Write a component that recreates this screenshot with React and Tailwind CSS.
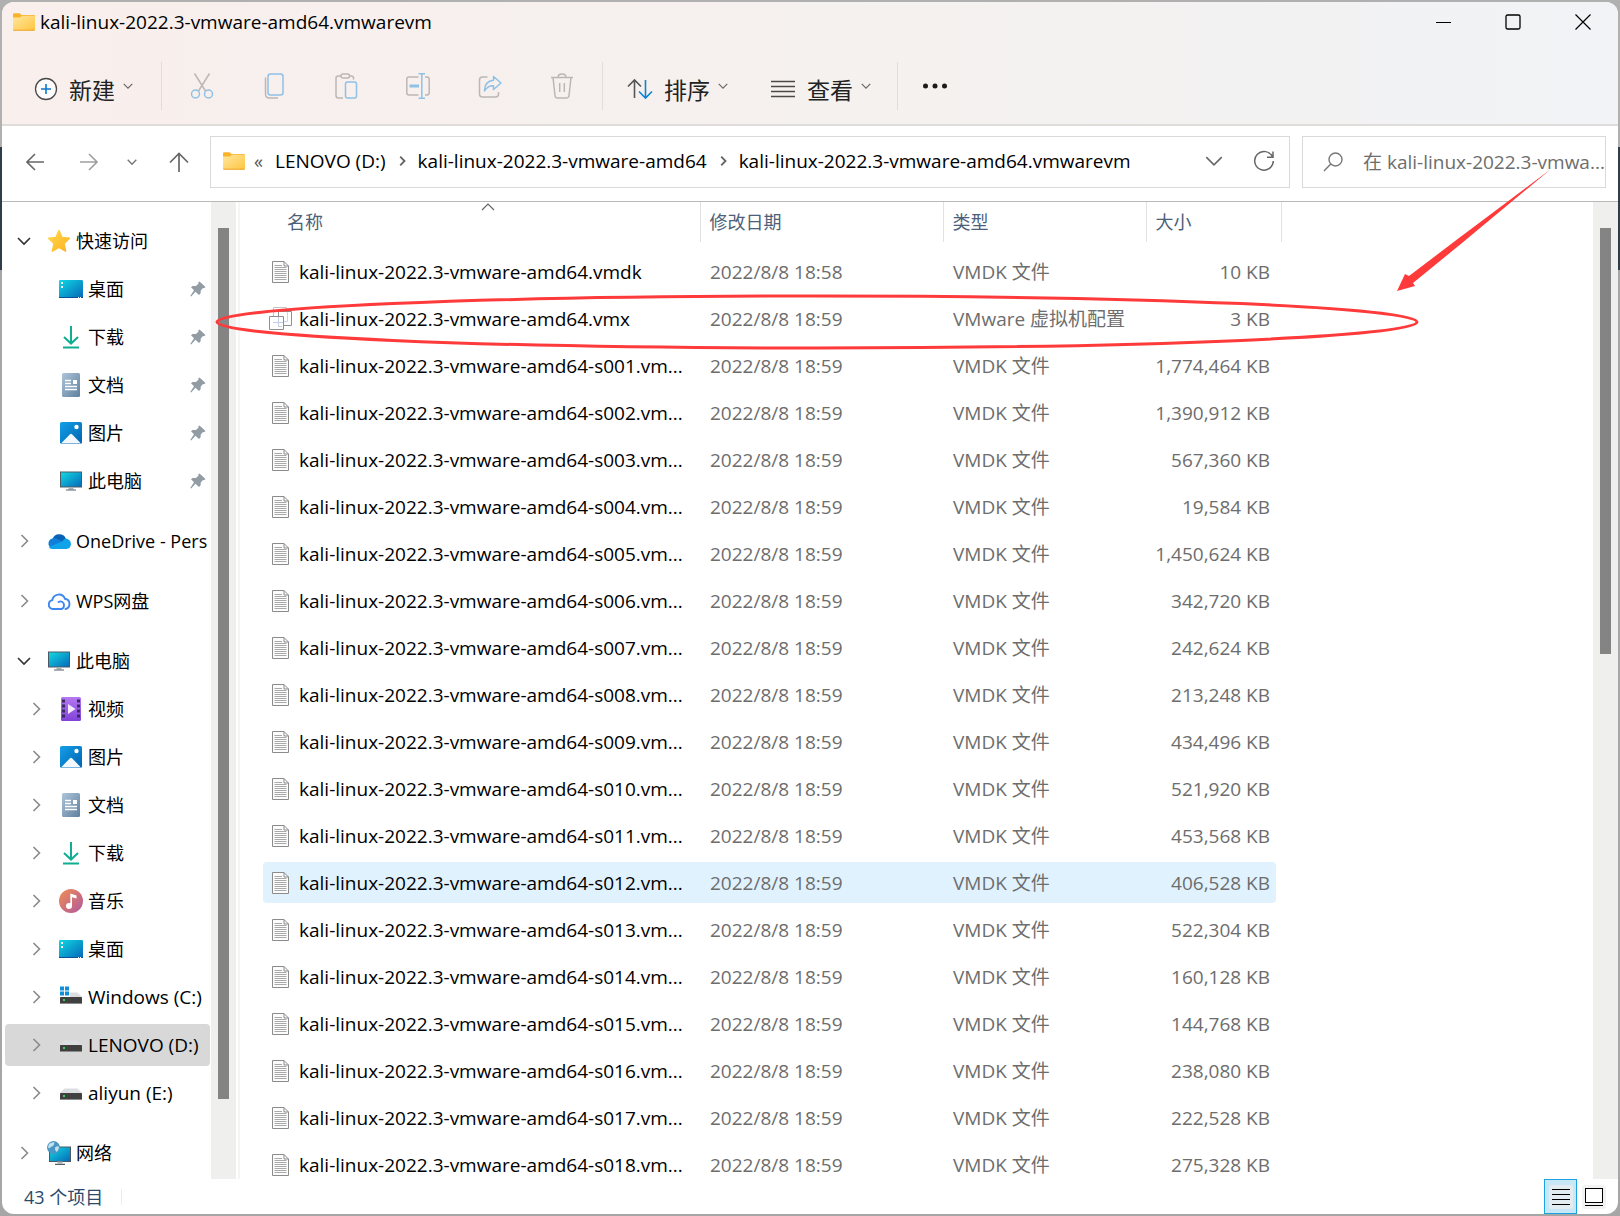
import React, { useState } from "react";

const sizes = [
  "1,774,464", "1,390,912", "567,360", "19,584", "1,450,624", "342,720",
  "242,624", "213,248", "434,496", "521,920", "453,568", "406,528",
  "522,304", "160,128", "144,768", "238,080", "222,528", "275,328",
];

const base = "kali-linux-2022.3-vmware-amd64";

const files = [
  { name: `${base}.vmdk`, date: "2022/8/8 18:58", type: "VMDK 文件", size: "10 KB" },
  { name: `${base}.vmx`, date: "2022/8/8 18:59", type: "VMware 虚拟机配置", size: "3 KB", vm: true },
  ...sizes.map((size, i) => ({
    name: `${base}-s${String(i + 1).padStart(3, "0")}.vm...`,
    date: "2022/8/8 18:59",
    type: "VMDK 文件",
    size: `${size} KB`,
  })),
];

const Folder = () => (
  <svg width="22" height="18" viewBox="0 0 22 18" className="shrink-0">
    <defs>
      <linearGradient id="folder" x1="0" y1="0" x2="1" y2="1">
        <stop offset="0" stopColor="#ffe7a0" />
        <stop offset="1" stopColor="#ffc53f" />
      </linearGradient>
    </defs>
    <path d="M0 1.5Q0 .3 1.2.3H6.600L8.500 2H20.800Q22 2 22 3.200V10H0Z" fill="#fbb32c" />
    <path d="M0 4.500H7L9 2.800H21Q22 2.800 22 3.800V16.500Q22 17.500 21 17.500H1Q0 17.500 0 16.500Z" fill="url(#folder)" />
    <path d="M.3 17.200H21.700" stroke="#eda325" strokeWidth="1" />
  </svg>
);

const Chevron = ({ dir = "right", size = 14, weight = 1.6, className = "" }) => {
  const d = {
    right: "M4.500 1L10.500 7L4.500 13",
    down: "M1 4L7 10L13 4",
    up: "M1 10L7 4L13 10",
  }[dir];
  return (
    <svg width={size} height={size} viewBox="0 0 14 14" fill="none" stroke="currentColor" strokeWidth={weight} className={`shrink-0 ${className}`}>
      <path d={d} />
    </svg>
  );
};

const Star = () => (
  <svg width="24" height="24" viewBox="0 0 24 24">
    <defs>
      <linearGradient id="star" x1="0" y1="0" x2="1" y2="1">
        <stop offset="0" stopColor="#ffdb4d" />
        <stop offset="1" stopColor="#fdb022" />
      </linearGradient>
    </defs>
    <path d="M12 1.500L15 8.400L22.500 9.200L17 14.400L18.600 22.200L12 18.500L5.400 22.200L7 14.400L1.500 9.200L9 8.400Z" fill="url(#star)" stroke="url(#star)" strokeWidth="1.400" strokeLinejoin="round" />
  </svg>
);

const Desktop = () => (
  <svg width="24" height="24" viewBox="0 0 24 24">
    <defs>
      <linearGradient id="desk" x1="0" y1="0" x2="1" y2="1">
        <stop offset="0" stopColor="#10d8e4" />
        <stop offset="1" stopColor="#0567b8" />
      </linearGradient>
    </defs>
    <rect y="3" width="24" height="18" rx="1.200" fill="url(#desk)" />
    <path d="M2 5h2v2H2zM2 9h2v2H2z" fill="#fff" />
    <path d="M0 20.500H24" stroke="#07549b" strokeWidth="1" />
    <path d="M19 20h1v1h-1zM21 20h1v1h-1z" fill="#fff" />
  </svg>
);

const Download = () => (
  <svg width="24" height="24" viewBox="0 0 24 24" fill="none" stroke="#10ad92" strokeWidth="2">
    <path d="M12 1V18M5 12L12 18.600L19 12" />
    <path d="M4 22.600H20" />
  </svg>
);

const Doc = () => (
  <svg width="24" height="24" viewBox="0 0 24 24">
    <defs>
      <linearGradient id="doc" x1="0" y1="0" x2="1" y2="1">
        <stop offset="0" stopColor="#adc5d9" />
        <stop offset="1" stopColor="#60809f" />
      </linearGradient>
    </defs>
    <rect x="3" width="18" height="24" rx="1.500" fill="url(#doc)" />
    <path d="M6 7.500h6M6 10.500h6M6 13.500h12M6 16.500h12" stroke="#fff" strokeWidth="1.300" />
    <rect x="14" y="7" width="4" height="4" fill="#fff" />
  </svg>
);

const Picture = () => (
  <svg width="24" height="24" viewBox="0 0 24 24">
    <defs>
      <linearGradient id="pic" x1="0" y1="0" x2="1" y2="1">
        <stop offset="0" stopColor="#12a0e8" />
        <stop offset="1" stopColor="#0362b0" />
      </linearGradient>
    </defs>
    <rect x="1" y="1" width="22" height="22" rx="1.800" fill="url(#pic)" />
    <path d="M2 22.500L11 13.200Q12 12.200 13 13.200L22 22.500Z" fill="#f3f8fd" />
    <circle cx="17.500" cy="6" r="2.200" fill="#fff" />
  </svg>
);

const Computer = () => (
  <svg width="24" height="24" viewBox="0 0 24 24">
    <defs>
      <linearGradient id="pc" x1="0" y1="0" x2="1" y2="1">
        <stop offset="0" stopColor="#12dbe2" />
        <stop offset="1" stopColor="#0667b9" />
      </linearGradient>
    </defs>
    <rect x="1.500" y="3" width="21" height="15" fill="url(#pc)" stroke="#4d5a66" strokeWidth="1" />
    <path d="M9.500 18.500h5v2h-5z" fill="#a8b0b6" />
    <path d="M7 21h10" stroke="#55606a" strokeWidth="1.200" />
  </svg>
);

const Video = () => (
  <svg width="24" height="24" viewBox="0 0 24 24">
    <defs>
      <linearGradient id="vid" x1="0" y1="0" x2="0" y2="1">
        <stop offset="0" stopColor="#b579f2" />
        <stop offset="1" stopColor="#8142d8" />
      </linearGradient>
    </defs>
    <rect x="2" width="20" height="24" rx="1.500" fill="url(#vid)" />
    <path d="M4.500 2.500V22M19.500 2.500V22" stroke="#3a2a63" strokeWidth="3" strokeDasharray="3 2" />
    <path d="M9 7V17L16.500 12Z" fill="#f4eafd" />
  </svg>
);

const Music = () => (
  <svg width="24" height="24" viewBox="0 0 24 24">
    <defs>
      <linearGradient id="mus" x1="0" y1="0" x2="1" y2="1">
        <stop offset="0" stopColor="#f18e52" />
        <stop offset="1" stopColor="#b0589f" />
      </linearGradient>
    </defs>
    <circle cx="12" cy="12" r="12" fill="url(#mus)" />
    <circle cx="10" cy="17" r="3" fill="#fff" />
    <path d="M11.300 17V4.500L17.500 6.500V9.500L13 8.200V17Z" fill="#fff" />
  </svg>
);

const Drive = ({ system }) => (
  <svg width="24" height="24" viewBox="0 0 24 24">
    <path d="M5.500 7.500H18.500L23 12H1Z" fill="#dcdee2" />
    <rect x="1" y="12" width="22" height="7" rx=".8" fill="#404040" />
    <path d="M1 18.500H23" stroke="#8a8a8a" strokeWidth="1" />
    <rect x="4" y="14" width="2" height="2" fill="#35d24c" />
    {system && (
      <g>
        <rect x="0" width="11" height="11" y="1" fill="#fff" />
        <path d="M1 1.500h4v4H1zM6 1.500h4v4H6zM1 6.500h4v4H1zM6 6.500h4v4H6z" fill="#0e8fd8" />
      </g>
    )}
  </svg>
);

const OneDrive = () => (
  <svg width="24" height="24" viewBox="0 0 24 24">
    <path d="M5.500 10A7.200 7.200 0 0 1 18.800 9.500L15 14H7Z" fill="#0862b5" />
    <path d="M4.500 19A5 5 0 0 1 5.500 9.500Q9 8.500 12.500 11L19 15.500L14 19Z" fill="#0f7fd9" />
    <path d="M1.800 18L15.500 12.300Q16.500 9.500 19 9.500Q23.800 10.500 24 15Q23.500 19.800 19.500 20H5Q3 19.800 1.800 18Z" fill="#0fa3ea" />
  </svg>
);

const WpsCloud = () => (
  <svg width="24" height="24" viewBox="0 0 24 24" fill="none" stroke="#3d87f0" strokeWidth="1.900" strokeLinecap="round">
    <path d="M14.500 20H5.500A4.500 4.500 0 0 1 5.300 11.200A6.600 6.600 0 0 1 18 9.800A5.200 5.200 0 0 1 18.500 20" />
    <path d="M11.500 13A3.600 3.600 0 0 1 17 16.500Q16.800 19.500 14.500 20" />
  </svg>
);

const Network = () => (
  <svg width="24" height="24" viewBox="0 0 24 24">
    <rect x="2.500" y="6" width="21" height="14.500" fill="url(#pc)" stroke="#4d5a66" strokeWidth="1" />
    <path d="M10.500 20.500h5v2h-5z" fill="#a8b0b6" />
    <path d="M8 23.400h10" stroke="#55606a" strokeWidth="1.200" />
    <circle cx="6.500" cy="6.500" r="6.500" fill="#4a97c4" />
    <path d="M2 3Q5 .8 7.500 1.500Q7 5 4 6Q2 8 1 6.500ZM8 6.500Q11 4.500 12 6Q12 9 9.500 11Q7.500 9 8 6.500Z" fill="#c3e1ef" />
  </svg>
);

const Pin = () => (
  <svg width="16" height="16" viewBox="0 0 16 16" className="shrink-0">
    <path d="M9.500.5L15.500 6L14 7.300L13 7L10.800 9.500L10.500 12.500L9 14L5.500 10.800L1.200 15.500L.3 15L4 9.200L1 6.200L2.600 5L6 5L8.600 2.500L8.200 1.500Z" fill="#919ca5" />
  </svg>
);

const FileIcon = () => (
  <svg width="17" height="22" viewBox="0 0 17 22" fill="none" className="shrink-0">
    <path d="M.5.5H12L16.500 5V21.500H.5Z" fill="#fcfcfc" stroke="#8b8b8b" />
    <path d="M12 .5V5H16.500" stroke="#8b8b8b" />
    <path d="M2.500 4.500H10M2.500 6.500H14.500M2.500 8.500H14.500M2.500 10.500H14.500M2.500 12.500H14.500M2.500 14.500H14.500M2.500 16.500H14.500M2.500 18.500H14.500" stroke="#a9a9a9" />
  </svg>
);

const VmIcon = () => (
  <svg width="23" height="23" viewBox="0 0 23 23" fill="none" className="shrink-0">
    <path d="M4.500 9V.5H17.500V4.500" stroke="#c4c4c4" />
    <path d="M9.500 9V4.500H22.500V18.500H14.500" stroke="#8f8f8f" />
    <path d="M18.500 5V14.500H14.500" stroke="#ccd6ea" />
    <path d="M.5 9.500H14.500V22.500H.5Z" fill="#fff" stroke="#8f8f8f" />
    <path d="M9.500 10V15.500H14M4 15.500H9.500V19.500H13" stroke="#c3cfe8" />
  </svg>
);

const quickAccess = [
  { label: "桌面", icon: <Desktop /> },
  { label: "下载", icon: <Download /> },
  { label: "文档", icon: <Doc /> },
  { label: "图片", icon: <Picture /> },
  { label: "此电脑", icon: <Computer /> },
];

const computer = [
  { label: "视频", icon: <Video /> },
  { label: "图片", icon: <Picture /> },
  { label: "文档", icon: <Doc /> },
  { label: "下载", icon: <Download /> },
  { label: "音乐", icon: <Music /> },
  { label: "桌面", icon: <Desktop /> },
  { label: "Windows (C:)", icon: <Drive system />, latin: true },
  { label: "LENOVO (D:)", icon: <Drive />, latin: true },
  { label: "aliyun (E:)", icon: <Drive />, latin: true },
];

const TreeItem = ({ label, icon, open, child, pinned, selected, latin, onClick }) => (
  <li className="py-[3px] pl-[3px]">
    <button
      onClick={onClick}
      className={`flex h-[42px] w-full items-center overflow-hidden rounded-sm whitespace-nowrap ${child ? "pl-6" : "pl-3"} ${selected ? "bg-[#d8d8d8]" : ""}`}
    >
      <span className="flex w-[30px] shrink-0">
        {!pinned && <Chevron dir={open ? "down" : "right"} className={open ? "text-[#333]" : "text-[#8a8a8a]"} />}
      </span>
      <span className="mr-[5px] shrink-0">{icon}</span>
      <span className={latin ? "text-[19px]" : "text-lg"}>{label}</span>
      {pinned && (
        <span className="mr-1 ml-auto">
          <Pin />
        </span>
      )}
    </button>
  </li>
);

const Sidebar = () => {
  const [current, setCurrent] = useState("LENOVO (D:)");

  return (
    <nav className="mr-px w-[208px] shrink-0 overflow-hidden pt-[15px] leading-6">
      <ul>
        <TreeItem label="快速访问" icon={<Star />} open />
        {quickAccess.map((item) => (
          <TreeItem key={item.label} {...item} child pinned />
        ))}
      </ul>
      <ul className="mt-3">
        <TreeItem label="OneDrive - Pers" icon={<OneDrive />} />
      </ul>
      <ul className="mt-3">
        <TreeItem label="WPS网盘" icon={<WpsCloud />} />
      </ul>
      <ul className="mt-3">
        <TreeItem label="此电脑" icon={<Computer />} open />
        {computer.map((item) => (
          <TreeItem
            key={item.label}
            {...item}
            child
            selected={current === item.label}
            onClick={() => setCurrent(item.label)}
          />
        ))}
      </ul>
      <ul className="mt-3">
        <TreeItem label="网络" icon={<Network />} />
      </ul>
    </nav>
  );
};

const Divider = () => <div className="h-12 w-px bg-[#e3dcda]" />;

const ToolIcon = ({ label, children }) => (
  <button aria-label={label} className="flex w-12 justify-center">
    <svg width="24" height="26" viewBox="0 0 24 26" fill="none" stroke="#bcb6b4" strokeWidth="1.500">
      {children}
    </svg>
  </button>
);

const MenuButton = ({ label, icon }) => (
  <button className="mt-1.5 flex items-center text-[23px] text-[#222]">
    {icon}
    <span className="mr-2 ml-[11px] pt-0.5">{label}</span>
    <Chevron dir="down" size={10} className="mb-1.5 text-[#666]" />
  </button>
);

const Toolbar = () => (
  <div className="flex h-[82px] items-center pt-1.5 pl-8">
    <MenuButton
      label="新建"
      icon={
        <svg width="24" height="24" viewBox="0 0 24 24" fill="none">
          <circle cx="12" cy="12" r="10.500" fill="#fdfbfb" stroke="#4a4a4a" strokeWidth="1.300" />
          <path d="M12 7V17M7 12H17" stroke="#0a78cf" strokeWidth="1.600" />
        </svg>
      }
    />
    <div className="mr-4 ml-7">
      <Divider />
    </div>
    <div className="flex gap-6">
      <ToolIcon label="剪切">
        <path d="M4.500.5L15.500 18M19.500.5L8.500 18" />
        <circle cx="5.500" cy="21" r="4" stroke="#8fc1e6" />
        <circle cx="18.500" cy="21" r="4" stroke="#8fc1e6" />
      </ToolIcon>
      <ToolIcon label="复制">
        <path d="M3.500 4.500V21Q3.500 25 7.500 25H16" />
        <rect x="6" y="1" width="15" height="21" rx="2.500" stroke="#8fc1e6" />
      </ToolIcon>
      <ToolIcon label="粘贴">
        <path d="M9 25H4.500Q2 25 2 22.500V5Q2 3 4.500 3H7M15 3H17Q19.500 3 19.500 5V6.500" />
        <rect x="7" y="1" width="8.500" height="4" rx="2" />
        <rect x="11.500" y="9" width="11" height="16" rx="2" stroke="#8fc1e6" />
      </ToolIcon>
      <ToolIcon label="重命名">
        <path d="M12.500 4H3Q.8 4 .8 6.500V19.500Q.8 22 3 22H12.500M19 4H21Q23.200 4 23.200 6.500V19.500Q23.200 22 21 22H19" />
        <path d="M3.500 13H13" stroke="#8fc1e6" strokeWidth="3" />
        <path d="M15.800 1V25M12.500.8H19M12.500 25.200H19" stroke="#8fc1e6" />
      </ToolIcon>
      <ToolIcon label="共享">
        <path d="M9.500 4H4.500Q1.500 4 1.500 7V21Q1.500 24 4.500 24H17.500Q20.500 24 20.500 21V19" />
        <path d="M15.500 3.500L23 10L15.500 16.500V12.800Q9.500 12.500 6.500 18Q6.500 8 15.500 7.200Z" stroke="#8fc1e6" strokeLinejoin="round" />
      </ToolIcon>
      <ToolIcon label="删除">
        <path d="M1 4.500H23M8 4.500Q8 1 12 1Q16 1 16 4.500M3 4.500L5 22.500Q5.300 25 7.500 25H16.500Q18.700 25 19 22.500L21 4.500M9.700 10V19M14.300 10V19" />
      </ToolIcon>
    </div>
    <div className="mr-6 ml-4">
      <Divider />
    </div>
    <MenuButton
      label="排序"
      icon={
        <svg width="26" height="22" viewBox="0 0 26 22" fill="none" strokeWidth="1.600">
          <path d="M7.500 20V2M1 8.500L7.500 2L14 8.500" stroke="#555" />
          <path d="M18.500 2V20M12 13.500L18.500 20L25 13.500" stroke="#0a84d8" />
        </svg>
      }
    />
    <div className="ml-[42px]">
      <MenuButton
        label="查看"
        icon={
          <svg width="26" height="18" viewBox="0 0 26 18" stroke="#4a4a4a" strokeWidth="1.400">
            <path d="M1 1.500H25M1 6.500H25M1 11.500H25M1 16.500H25" />
          </svg>
        }
      />
    </div>
    <div className="mr-6 ml-[26px]">
      <Divider />
    </div>
    <button aria-label="更多">
      <svg width="26" height="6" viewBox="0 0 26 6" fill="#1c1c1c">
        <circle cx="3.500" cy="3" r="2.500" />
        <circle cx="13" cy="3" r="2.500" />
        <circle cx="22.500" cy="3" r="2.500" />
      </svg>
    </button>
  </div>
);

const TitleBar = () => (
  <div className="flex h-10 items-center pl-[11px]">
    <Folder />
    <h1 className="ml-[5px]">kali-linux-2022.3-vmware-amd64.vmwarevm</h1>
    <div className="mr-[27px] ml-auto flex gap-[54px]">
      <button aria-label="最小化">
        <svg width="16" height="16" viewBox="0 0 16 16" stroke="#000">
          <path d="M1 8.500H16" />
        </svg>
      </button>
      <button aria-label="最大化">
        <svg width="16" height="16" viewBox="0 0 16 16" fill="none" stroke="#000" strokeWidth="1.300">
          <rect x="1" y="1" width="14" height="14" rx="1.500" />
        </svg>
      </button>
      <button aria-label="关闭">
        <svg width="16" height="16" viewBox="0 0 16 16" stroke="#000" strokeWidth="1.200">
          <path d="M.5.5L15.500 15.500M15.500.5L.5 15.500" />
        </svg>
      </button>
    </div>
  </div>
);

const AddressBar = () => (
  <div className="flex h-[75px] items-center pr-3 pb-1 pl-6">
    <button aria-label="后退" className="text-[#666]">
      <svg width="18" height="18" viewBox="0 0 18 18" fill="none" stroke="currentColor" strokeWidth="1.600">
        <path d="M18 9H1M9 1L1 9L9 17" />
      </svg>
    </button>
    <button aria-label="前进" className="ml-9 text-[#a0a0a0]">
      <svg width="18" height="18" viewBox="0 0 18 18" fill="none" stroke="currentColor" strokeWidth="1.600">
        <path d="M0 9H17M9 1L17 9L9 17" />
      </svg>
    </button>
    <button aria-label="最近" className="ml-[29px] text-[#777]">
      <Chevron dir="down" size={10} weight={2} />
    </button>
    <button aria-label="上移" className="ml-8 text-[#666]">
      <svg width="20" height="20" viewBox="0 0 20 20" fill="none" stroke="currentColor" strokeWidth="1.700">
        <path d="M10 20V1.500M1 10.500L10 1.500L19 10.500" />
      </svg>
    </button>
    <div className="ml-[21px] flex h-[52px] min-w-0 flex-1 items-center border border-[#d9d9d9] pb-0.5 pl-3 whitespace-nowrap">
      <Folder />
      <span className="mr-2.5 ml-[9px] w-[11px] text-lg text-[#555]">«</span>
      <a href="#d">LENOVO (D:)</a>
      <Chevron size={10} weight={2.6} className="mx-[11px] text-[#666]" />
      <a href="#vm">kali-linux-2022.3-vmware-amd64</a>
      <Chevron size={10} weight={2.6} className="mx-[11px] text-[#666]" />
      <a href="#vmwarevm">kali-linux-2022.3-vmware-amd64.vmwarevm</a>
      <button aria-label="历史" className="ml-auto text-[#666]">
        <Chevron dir="down" size={18} weight={1.2} />
      </button>
      <button aria-label="刷新" className="mr-[14px] ml-[30px] text-[#666]">
        <svg width="22" height="22" viewBox="0 0 22 22" fill="none" stroke="currentColor" strokeWidth="1.500">
          <path d="M19.500 7A9.300 9.300 0 1 0 20.300 11M20 1.500V7.200H14" />
        </svg>
      </button>
    </div>
    <label className="ml-3 flex h-[52px] w-[304px] items-center border border-[#d9d9d9] pl-5">
      <svg width="20" height="20" viewBox="0 0 20 20" fill="none" stroke="#777" strokeWidth="1.400">
        <circle cx="12.500" cy="7.500" r="6.500" />
        <path d="M7.800 12L1 19" />
      </svg>
      <input
        aria-label="搜索"
        placeholder="在 kali-linux-2022.3-vmwa..."
        className="ml-5 min-w-0 flex-1 outline-none placeholder:text-[#6d6d6d]"
      />
    </label>
  </div>
);

const FileTable = () => {
  const [active, setActive] = useState(13);
  const th = "h-10 border-r border-[#e2e2e2] pl-[9px] text-left font-normal";

  return (
    <table className="ml-[23px] w-[1018px] table-fixed border-collapse">
      <colgroup>
        <col className="w-[437px]" />
        <col className="w-[243px]" />
        <col className="w-[203px]" />
        <col className="w-[135px]" />
      </colgroup>
      <thead className="text-lg text-[#4c607a]">
        <tr>
          <th className="relative h-10 border-r border-[#e2e2e2] pl-6 text-left font-normal">
            名称
            <Chevron dir="up" size={14} weight={1.2} className="absolute -top-0.5 left-1/2 text-[#666]" />
          </th>
          <th className={th}>修改日期</th>
          <th className={th}>类型</th>
          <th className={th}>大小</th>
        </tr>
        <tr className="h-1.5" />
      </thead>
      <tbody>
        {files.map((file, i) => {
          const bg = active === i ? "bg-[#e1f2ff]" : "";
          return (
            <tr key={file.name} onClick={() => setActive(i)} className="h-[47px] text-[#6d6d6d]">
              <td className="p-0">
                <div className={`flex h-[41px] items-center rounded-l-sm text-black ${bg}`}>
                  <span className="mr-0.5 flex w-[34px] shrink-0 justify-center">{file.vm ? <VmIcon /> : <FileIcon />}</span>
                  <span className="truncate">{file.name}</span>
                </div>
              </td>
              <td className="p-0">
                <div className={`flex h-[41px] items-center pl-2.5 ${bg}`}>{file.date}</div>
              </td>
              <td className="p-0">
                <div className={`flex h-[41px] items-center pl-2.5 ${bg}`}>{file.type}</div>
              </td>
              <td className="p-0">
                <div className={`mr-[5px] flex h-[41px] items-center justify-end rounded-r-sm pr-1.5 ${bg}`}>{file.size}</div>
              </td>
            </tr>
          );
        })}
      </tbody>
    </table>
  );
};

const StatusBar = () => (
  <footer className="flex h-[35px] shrink-0 items-center pl-[22px] text-[#2b4a6b]">
    <span className="text-lg">43 个项目</span>
    <div className="ml-[18px] h-4 w-px bg-[#ececec]" />
    <button aria-label="详细信息" className="ml-auto flex h-[35px] w-[33px] items-center justify-center border border-[#1aa3dc] bg-[#c9e8f7]">
      <svg width="24" height="24" viewBox="0 0 24 24" stroke="#000">
        <rect width="24" height="24" rx="3" fill="#e3edf1" stroke="none" />
        <path d="M3 4.500H21M3 9.500H21M3 14.500H21M3 19.500H21" />
      </svg>
    </button>
    <button aria-label="大图标" className="mr-3 ml-[5px]">
      <svg width="24" height="24" viewBox="0 0 24 24" fill="none" stroke="#000">
        <rect width="24" height="24" rx="3" fill="#f3f3f3" stroke="none" />
        <rect x="3.500" y="3.500" width="17" height="14" fill="#fff" />
        <path d="M3 20.500H21" />
      </svg>
    </button>
  </footer>
);

// red ellipse and arrow that point at the .vmx file
const Markup = () => (
  <svg width="1616" height="400" className="pointer-events-none absolute top-0 left-0" fill="none">
    <ellipse cx="815" cy="320" rx="600" ry="26" stroke="#ff3a3a" strokeWidth="3" />
    <path d="M1549 167L1457 236L1407 274L1403 272L1395 289L1413 284L1411 281L1460 241Z" fill="#ff3a3a" />
  </svg>
);

const App = () => {
  return (
    <div className="h-screen bg-[linear-gradient(#b0b0b0_147px,#2f3d4b_147px,#2f3d4b_270px,#a6a6a6_270px)] p-0.5 font-['Open_Sans','Noto_Sans_CJK_SC',sans-serif] text-[19px] leading-6 text-black">
      <div className="relative flex h-full flex-col overflow-hidden rounded-xl bg-white">
        <header className="shrink-0 border-b-2 border-[#e0dcda] bg-linear-to-r from-[#f9efed] via-[#f5f1ee] to-[#f1f3f6]">
          <TitleBar />
          <Toolbar />
        </header>
        <AddressBar />
        <main className="flex min-h-0 flex-1 border-t border-[#b9b9b9]">
          <Sidebar />
          <div className="flex w-[25px] shrink-0 justify-center bg-[#efefee] pt-[26px] pb-20">
            <div className="w-[11px] bg-[#848484]" />
          </div>
          <div className="ml-0.5 min-w-0 flex-1 overflow-hidden border-l-2 border-[#f5f5f5]">
            <FileTable />
          </div>
          <div className="flex w-[25px] shrink-0 justify-center bg-[#efefee] pt-[26px]">
            <div className="h-[426px] w-[11px] bg-[#848484]" />
          </div>
        </main>
        <StatusBar />
        <Markup />
      </div>
    </div>
  );
};

export default App;
